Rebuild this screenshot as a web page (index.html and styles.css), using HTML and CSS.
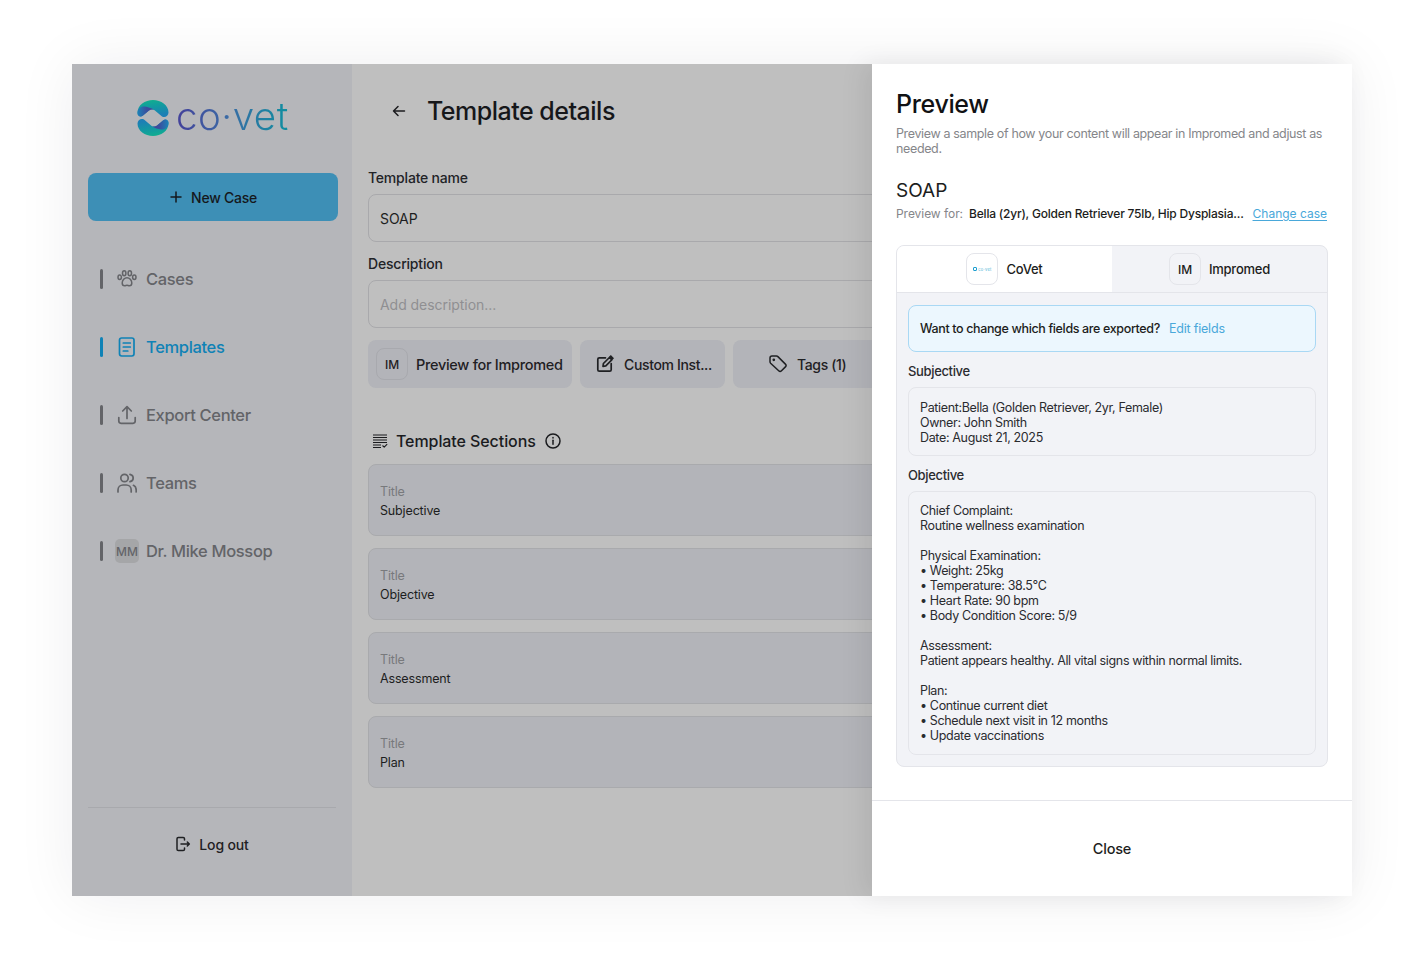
FILE: index.html
```html
<!DOCTYPE html>
<html lang="en">
<head>
<meta charset="utf-8">
<title>Template details</title>
<link rel="stylesheet" href="styles.css">
</head>
<body>
<div class="window">
  <aside class="sidebar">
    <div class="logo">
      <svg class="logo-mark" viewBox="0 0 32 36" width="32" height="36">
        <defs>
          <linearGradient id="cap" x1="0" y1="0" x2="0.300" y2="1"><stop offset="0" stop-color="#10b48a"/><stop offset="0.500" stop-color="#129aa0"/><stop offset="1" stop-color="#1c7fb5"/></linearGradient>
          <linearGradient id="fold" x1="0" y1="0" x2="1" y2="0"><stop offset="0" stop-color="#1b82b8"/><stop offset="0.550" stop-color="#3a4f9e"/><stop offset="1" stop-color="#4a3c98"/></linearGradient>
          <g id="half">
            <path d="M0.500 13C0.500 5 8 0 16 0C24 0 31.500 5 31.500 12.500C31.500 16 28 18 25 16.500L18.500 11C16.500 9 14 9 12 10.500L6 15.500C3.500 17.500 0.500 16 0.500 13Z" fill="url(#cap)"/>
            <path d="M0.500 13C0.500 8.500 4 6 8 6.500C11 7 14 8 17 9.800C15 9 13 9.700 12 10.500L6 15.500C3.500 17.500 0.500 16 0.500 13Z" fill="url(#fold)"/>
          </g>
        </defs>
        <use href="#half"/>
        <use href="#half" transform="rotate(180 16 18)"/>
      </svg>
      <span class="logo-text">co·vet</span>
    </div>
    <button class="new-case">
      <svg viewBox="0 0 14 14" width="14" height="14"><path d="M7 2v10M2 7h10" class="ico"/></svg>
      <span>New Case</span>
    </button>
    <nav class="nav">
      <a class="nav-item">
        <i class="nav-bar"></i>
        <svg class="nav-icon" viewBox="0 0 20 20" width="20" height="20"><g class="ico"><path d="M10 8.700c-2.500 0-4.800 2.600-4.800 5.300 0 1.800 1.100 2.800 2.400 2.800 1 0 1.500-.6 2.400-.6s1.400.6 2.400.6c1.300 0 2.400-1 2.400-2.800 0-2.700-2.300-5.300-4.800-5.300Z"/><ellipse cx="7.200" cy="4.300" rx="1.700" ry="2.500"/><ellipse cx="12.800" cy="4.300" rx="1.700" ry="2.500"/><ellipse cx="2.700" cy="8.300" rx="1.700" ry="2.200"/><ellipse cx="17.300" cy="8.300" rx="1.700" ry="2.200"/></g></svg>
        <span>Cases</span>
      </a>
      <a class="nav-item active">
        <i class="nav-bar"></i>
        <svg class="nav-icon" viewBox="0 0 20 20" width="20" height="20"><g class="ico bold"><rect x="2.500" y="1" width="14.500" height="18" rx="2.200"/><path d="M6.300 6h7M6.300 10h7M6.300 14h4.500"/></g></svg>
        <span>Templates</span>
      </a>
      <a class="nav-item">
        <i class="nav-bar"></i>
        <svg class="nav-icon" viewBox="0 0 20 20" width="20" height="20"><g class="ico bold"><path d="M10 13.500V1.800M5.700 6l4.300-4.300 4.300 4.300"/><path d="M1.800 12.500v3.600c0 1.300.9 2.200 2.200 2.200h12c1.300 0 2.200-.9 2.200-2.200v-3.600"/></g></svg>
        <span>Export Center</span>
      </a>
      <a class="nav-item">
        <i class="nav-bar"></i>
        <svg class="nav-icon" viewBox="0 0 20 20" width="20" height="20"><g class="ico bold"><circle cx="7.500" cy="5" r="3.700"/><path d="M1 19v-2c0-3 2.300-5 5-5h3.200c2.700 0 5 2 5 5v2"/><path d="M13 1.300c2.100.5 3.200 2 3.200 3.700s-1.100 3.200-3.200 3.700M16.500 12.300c1.600.8 2.700 2.500 2.700 4.700v2"/></g></svg>
        <span>Teams</span>
      </a>
      <a class="nav-item">
        <i class="nav-bar"></i>
        <span class="avatar">MM</span>
        <span>Dr. Mike Mossop</span>
      </a>
    </nav>
    <div class="logout-row">
      <svg viewBox="0 0 16 16" width="16" height="16"><g class="ico"><path d="M9.500 4V2.800c0-.7-.5-1.300-1.300-1.300H3.300c-.8 0-1.300.6-1.300 1.300v10.400c0 .7.5 1.300 1.300 1.300h4.900c.8 0 1.300-.6 1.300-1.300V12"/><path d="M6 8h8M12.300 6 14.300 8l-2 2"/></g></svg>
      <span>Log out</span>
    </div>
  </aside>

  <main class="main">
    <header class="main-head">
      <svg viewBox="0 0 14 14" width="14" height="14"><path d="M12.500 7h-11M6 2.500 1.500 7 6 11.500" class="ico"/></svg>
      <h1>Template details</h1>
    </header>
    <label class="field-label">Template name</label>
    <div class="input">SOAP</div>
    <label class="field-label">Description</label>
    <div class="input placeholder">Add description...</div>
    <div class="actions">
      <div class="action a1"><span class="badge">IM</span><span>Preview for Impromed</span></div>
      <div class="action a2">
        <svg viewBox="0 0 18 18" width="18" height="18"><g class="ico bold"><path d="M9.500 2.800H3.300C2.400 2.800 1.800 3.400 1.800 4.300v10.400c0 .9.6 1.500 1.500 1.500h10.400c.9 0 1.500-.6 1.500-1.500V8.500"/><path d="M7 11.300l.4-2.800 6-6 2.400 2.400-6 6Z"/></g><path class="nib" d="M13 1.800 14.800 0 18 3.200 16.200 5Z"/></svg>
        <span>Custom Inst...</span>
      </div>
      <div class="action a3">
        <svg viewBox="0 0 18 18" width="18" height="18"><g class="ico"><path d="M1 3c0-1.100.9-2 2-2h4.500c.5 0 1 .2 1.400.6l7.500 7.500c.8.800.8 2 0 2.800l-3.900 3.900c-.8.800-2 .8-2.800 0L1.600 8.200C1.200 7.800 1 7.300 1 6.800Z"/><circle cx="4.800" cy="4.800" r=".6"/></g></svg>
        <span>Tags (1)</span>
      </div>
    </div>
    <div class="section-head">
      <svg viewBox="0 0 16 16" width="16" height="16"><path class="ico thin" d="M1 2h14M1 4.500h14M1 7h14M1 9.500h14M1 12h8M1 14.500h8M10.500 12.500l1.700 1.700 3-3"/></svg>
      <span>Template Sections</span>
      <svg viewBox="0 0 16 16" width="16" height="16"><g class="ico"><circle cx="8" cy="8" r="7"/><path d="M8 7.300v4"/><path d="M8 4.500v.4"/></g></svg>
    </div>
    <div class="sections">
      <div class="section-card"><span class="sc-title">Title</span><span class="sc-value">Subjective</span></div>
      <div class="section-card"><span class="sc-title">Title</span><span class="sc-value">Objective</span></div>
      <div class="section-card"><span class="sc-title">Title</span><span class="sc-value">Assessment</span></div>
      <div class="section-card"><span class="sc-title">Title</span><span class="sc-value">Plan</span></div>
    </div>
  </main>

  <section class="panel">
    <div class="panel-body">
      <h2>Preview</h2>
      <p class="panel-desc">Preview a sample of how your content will appear in Impromed and adjust as needed.</p>
      <h3>SOAP</h3>
      <div class="preview-for">
        <span class="pf-label">Preview for:</span>
        <span class="pf-value">Bella (2yr), Golden Retriever 75lb, Hip Dysplasia...</span>
        <a class="pf-link">Change case</a>
      </div>
      <div class="tabcard">
        <div class="tabs">
          <div class="tab on">
            <span class="badge white"><span class="mini-logo"><i></i><b>co·vet</b></span></span>
            <span>CoVet</span>
          </div>
          <div class="tab"><span class="badge">IM</span><span>Impromed</span></div>
        </div>
        <div class="tab-body">
          <div class="notice">
            <span>Want to change which fields are exported?</span>
            <a>Edit fields</a>
          </div>
          <div class="block-label">Subjective</div>
          <div class="block">Patient:Bella (Golden Retriever, 2yr, Female)
Owner: John Smith
Date: August 21, 2025</div>
          <div class="block-label">Objective</div>
          <div class="block long">Chief Complaint:
Routine wellness examination

Physical Examination:
• Weight: 25kg
• Temperature: 38.5°C
• Heart Rate: 90 bpm
• Body Condition Score: 5/9

Assessment:
Patient appears healthy. All vital signs within normal limits.

Plan:
• Continue current diet
• Schedule next visit in 12 months
• Update vaccinations</div>
        </div>
      </div>
    </div>
    <footer class="panel-foot">Close</footer>
  </section>
</div>
</body>
</html>
```
FILE: styles.css
```css
* { box-sizing: border-box; }
html, body { margin: 0; height: 100%; }
body {
  background: #fff;
  padding: 64px 64px 72px 72px;
  font-family: "Inter", "Liberation Sans", sans-serif;
  color: #1c1c1f;
  overflow: hidden;
}
.window {
  width: 1280px;
  height: 832px;
  display: flex;
  box-shadow: 0 0 56px rgba(20, 20, 40, 0.07);
}
.ico { fill: none; stroke: currentColor; stroke-width: 1.500; stroke-linecap: round; stroke-linejoin: round; }
.ico.bold { stroke-width: 1.700; }
.ico.thin { stroke-width: 1.100; stroke-linecap: butt; }
.nib { fill: currentColor; }

/* sidebar */
.sidebar {
  width: 280px;
  flex: none;
  background: #b5b6ba;
  display: flex;
  flex-direction: column;
  padding: 0 14px 0 16px;
}
.logo {
  height: 106px;
  margin-bottom: 3px;
  display: flex;
  align-items: center;
  gap: 7px;
  padding: 0 0 0 49px;
}
.logo-mark { margin-top: 2px; }
.logo-text {
  font-size: 38.500px;
  font-weight: 300;
  line-height: 40px;
  letter-spacing: 0.5px;
  margin-bottom: 2px;
  background: linear-gradient(90deg, #43409a 0%, #3b6aa5 45%, #0e8fa0 100%);
  -webkit-background-clip: text;
  background-clip: text;
  color: transparent;
}
.new-case {
  width: 250px;
  height: 48px;
  border: 0;
  border-radius: 8px;
  background: #3d8fb6;
  color: #15181c;
  font: 500 14px "Inter", sans-serif;
  letter-spacing: -0.25px;
  display: flex;
  align-items: center;
  justify-content: center;
  gap: 8px;
  padding: 0;
}
.nav {
  flex: 1;
  display: flex;
  flex-direction: column;
  gap: 28px;
  padding-top: 38px;
}
.nav-item {
  height: 40px;
  display: flex;
  align-items: center;
  font-size: 16.500px;
  font-weight: 500;
  letter-spacing: -0.35px;
  color: #636468;
}
.nav-bar {
  width: 3px;
  height: 20px;
  border-radius: 2px;
  background: #636468;
  margin: 0 14px 0 12px;
  flex: none;
}
.nav-icon { flex: none; margin-right: 9px; }
.nav-item.active, .nav-item.active .nav-bar { color: #0f82b6; }
.nav-item.active .nav-bar { background: #0f82b6; }
.avatar {
  width: 24px;
  height: 24px;
  border-radius: 5px;
  background: #a5a6a8;
  font-size: 12px;
  font-weight: 500;
  letter-spacing: 0;
  display: flex;
  align-items: center;
  justify-content: center;
  margin-right: 7px;
  margin-left: -2px;
}
.logout-row {
  width: 248px;
  height: 89px;
  border-top: 1px solid #a8a9ad;
  display: flex;
  align-items: flex-start;
  justify-content: center;
  gap: 8px;
  padding-top: 28px;
  font-size: 14px;
  font-weight: 500;
  letter-spacing: -0.15px;
  line-height: 18px;
  color: #1f2023;
}

/* main */
.main {
  width: 520px;
  flex: none;
  background: #bfbfbf;
  padding: 0 0 0 16px;
  overflow: hidden;
}
.main-head {
  height: 96px;
  padding: 0 0 2px 24px;
  display: flex;
  align-items: center;
  gap: 21px;
}
.main-head h1 {
  margin: 0;
  font-size: 25px;
  font-weight: 500;
  letter-spacing: -0.5px;
  color: #16171a;
}
.field-label {
  display: block;
  font-size: 14px;
  font-weight: 500;
  letter-spacing: -0.2px;
  line-height: 20px;
  margin: 12px 0 6px;
  color: #222327;
}
.main-head + .field-label { margin-top: 8px; }
.input {
  width: 600px;
  height: 48px;
  border: 1px solid #a9a9ac;
  border-radius: 8px;
  display: flex;
  align-items: center;
  padding: 0 11px;
  font-size: 14px;
  letter-spacing: -0.05px;
  color: #1d1e21;
}
.input.placeholder { color: #8f8f92; }
.actions {
  display: flex;
  gap: 8px;
  margin-top: 12px;
  white-space: nowrap;
}
.action {
  height: 48px;
  border-radius: 8px;
  background: #b3b4b9;
  display: flex;
  align-items: center;
  font-size: 14px;
  font-weight: 500;
  letter-spacing: -0.35px;
  color: #1f2023;
  flex: none;
}
.a1 { width: 204px; padding-left: 8px; gap: 8px; font-size: 14.500px; letter-spacing: -0.3px; }
.a2 { width: 145px; padding-left: 16px; gap: 10px; }
.a3 { width: 200px; padding-left: 36px; gap: 10px; }
.badge {
  width: 32px;
  height: 32px;
  border-radius: 8px;
  border: 1px solid #e4e5ea;
  display: flex;
  align-items: center;
  justify-content: center;
  font-size: 12px;
  font-weight: 500;
  letter-spacing: 0;
  flex: none;
}
.main .badge { border-color: #a8a9ae; }
.section-head {
  display: flex;
  align-items: center;
  height: 24px;
  margin-top: 41px;
  font-size: 16px;
  font-weight: 500;
  letter-spacing: -0.08px;
  color: #1a1b1e;
  padding-left: 4px;
}
.section-head span { margin: 0 9px 0 8px; }
.sections {
  margin-top: 11px;
  display: flex;
  flex-direction: column;
  gap: 12px;
}
.section-card {
  width: 600px;
  height: 72px;
  border: 1px solid #a9aaad;
  border-radius: 8px;
  background: #b3b4b9;
  display: flex;
  flex-direction: column;
  justify-content: center;
  padding: 2px 11px 0;
  font-size: 12.500px;
  line-height: 19px;
  letter-spacing: -0.15px;
}
.sc-title { color: #78797c; }
.sc-value { color: #1d1e21; }

/* right panel */
.panel {
  width: 480px;
  flex: none;
  background: #fff;
  display: flex;
  flex-direction: column;
  box-shadow: -8px 0 24px rgba(0, 0, 0, 0.08);
  position: relative;
}
.panel-body {
  flex: 1;
  padding: 24px 24px 0;
}
.panel-body h2 {
  margin: 0;
  font-size: 25px;
  line-height: 32px;
  font-weight: 500;
  letter-spacing: -0.35px;
  color: #111214;
}
.panel-desc {
  margin: 6px 0 0;
  font-size: 12.500px;
  line-height: 15px;
  letter-spacing: -0.36px;
  color: #85868a;
}
.panel-body h3 {
  margin: 23px 0 0;
  font-size: 19px;
  line-height: 24px;
  font-weight: 400;
  color: #1c1d20;
}
.preview-for {
  display: flex;
  align-items: center;
  margin-top: 1px;
  height: 18px;
  font-size: 12px;
  letter-spacing: -0.2px;
  white-space: nowrap;
}
.pf-label { color: #85868a; margin-right: 6px; letter-spacing: -0.05px; }
.pf-value { color: #1c1d20; font-weight: 500; }
.pf-link { color: #49a8da; margin-left: auto; padding-right: 1px; text-decoration: underline; text-underline-offset: 2px; letter-spacing: 0; }
.tabcard {
  margin-top: 23px;
  border: 1px solid #e4e5ea;
  border-radius: 8px;
  background: #f2f3f7;
  overflow: hidden;
}
.tabs { display: flex; height: 47px; border-bottom: 1px solid #e4e5ea; }
.tab {
  flex: 1;
  display: flex;
  align-items: center;
  justify-content: center;
  gap: 8px;
  font-size: 13px;
  font-weight: 500;
  letter-spacing: -0.25px;
  color: #1c1d20;
}
.tab.on { background: #fff; }
.mini-logo { display: flex; align-items: center; gap: 1px; }
.mini-logo i { width: 4px; height: 4px; border: 1px solid #1d9fd0; border-radius: 1px; }
.mini-logo b { font-size: 4px; font-weight: 400; color: #4db4d6; letter-spacing: 0.3px; }
.tab-body { padding: 12px 11px 11px; }
.notice {
  height: 47px;
  border: 1px solid #a9d8f4;
  border-radius: 8px;
  background: #ecf7fe;
  display: flex;
  align-items: center;
  padding: 0 11px;
  font-size: 12.500px;
  font-weight: 500;
  letter-spacing: -0.36px;
  gap: 9px;
  color: #1c1d20;
}
.notice a { color: #49a8da; font-weight: 400; letter-spacing: -0.2px; }
.block-label {
  margin: 10px 0 7px;
  font-size: 13px;
  line-height: 18px;
  font-weight: 500;
  letter-spacing: -0.35px;
  color: #2a2b2f;
}
.block {
  border: 1px solid #e4e5ea;
  border-radius: 8px;
  padding: 12px 11px 10px;
  font-size: 12.500px;
  line-height: 15px;
  letter-spacing: -0.35px;
  color: #2a2b2f;
  white-space: pre-line;
}
.block.long { padding: 11px; }
.panel-foot {
  height: 96px;
  border-top: 1px solid #e4e5ea;
  display: flex;
  align-items: center;
  justify-content: center;
  font-size: 14.500px;
  font-weight: 500;
  letter-spacing: -0.2px;
  color: #1c1d20;
}
```
